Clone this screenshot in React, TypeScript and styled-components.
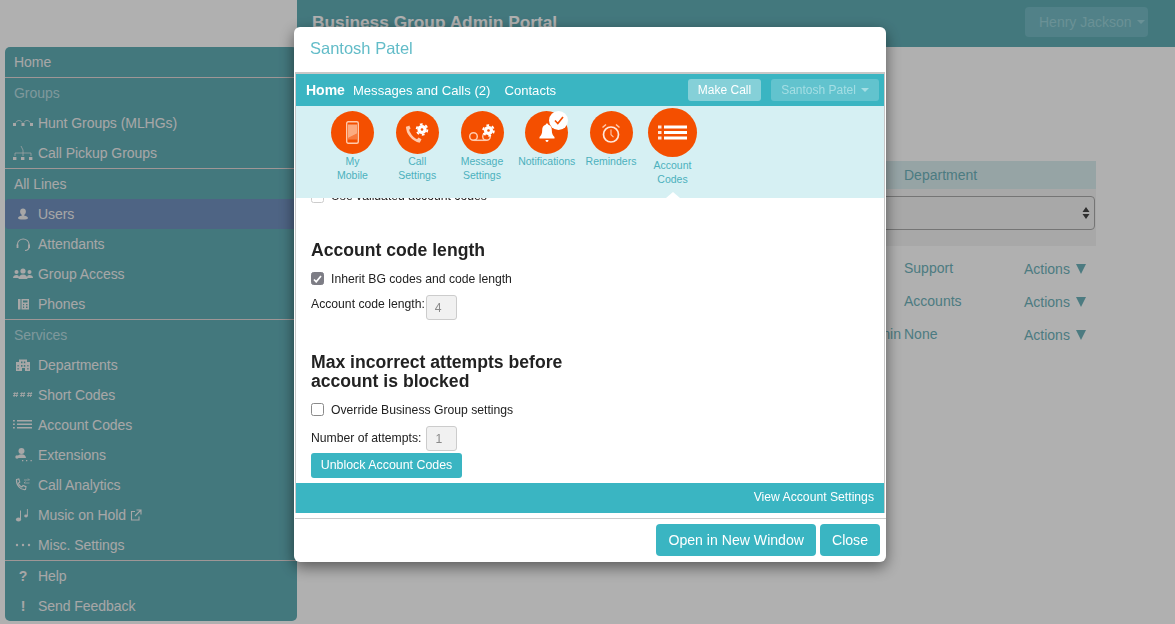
import React from 'react';
import styled, { createGlobalStyle } from 'styled-components';

const GlobalStyle = createGlobalStyle`
  html, body {
    margin: 0;
    height: 100%;
    overflow: hidden;
    background: #fff;
    font-family: "Liberation Sans", Arial, sans-serif;
  }
  * { box-sizing: border-box; }
`;

/* sidebar glyphs, all on a 20x16 box */
const SideIcons: Record<string, React.ReactNode> = {
  hunt: (
    <>
      <path d="M3 7.500a3.200 3.200 0 0 1 6 0M11 7.500a3.200 3.200 0 0 1 6 0" fill="none" stroke="currentColor" strokeWidth="0.700" />
      <rect x="0" y="8" width="3" height="3" fill="currentColor" />
      <rect x="8.500" y="8" width="3" height="3" fill="currentColor" />
      <rect x="17" y="8" width="3" height="3" fill="currentColor" />
    </>
  ),
  pickup: (
    <>
      <path d="M8 1l2 4v3M2 11V8h16v3M10 8v3" fill="none" stroke="currentColor" strokeWidth="0.700" />
      <rect x="0" y="12" width="3.400" height="3" fill="currentColor" />
      <rect x="8" y="12" width="3.400" height="3" fill="currentColor" />
      <rect x="16" y="12" width="3.400" height="3" fill="currentColor" />
    </>
  ),
  user: (
    <path d="M10 2.500c1.800 0 2.900 1.300 2.900 3 0 1.400-.7 2.700-1.600 3.300v1c2 .4 3.700 1 3.700 2.200 0 1-2.200 1.500-5 1.500s-5-.5-5-1.500c0-1.200 1.700-1.800 3.700-2.200v-1c-.9-.6-1.600-1.900-1.600-3.300 0-1.700 1.100-3 2.900-3z" fill="currentColor" />
  ),
  headset: (
    <>
      <path d="M4.500 10V8a5.800 5.800 0 0 1 11.500 0v3c0 2-1.500 3.300-4 3.500" fill="none" stroke="currentColor" strokeWidth="1.100" />
      <rect x="3.600" y="8.500" width="1.800" height="3.500" fill="currentColor" />
      <rect x="15.200" y="8.500" width="1.800" height="3.500" fill="currentColor" />
    </>
  ),
  group: (
    <>
      <circle cx="3.500" cy="6" r="2" fill="currentColor" />
      <circle cx="16.500" cy="6" r="2" fill="currentColor" />
      <circle cx="10" cy="5" r="2.600" fill="currentColor" />
      <path d="M0 12c0-2 1.500-3 3.500-3S6 10 6 12zM14 12c0-2 .5-3 2.500-3s3.500 1 3.500 3zM5.500 13c0-3 2-4.500 4.500-4.500s4.500 1.500 4.500 4.500z" fill="currentColor" />
    </>
  ),
  phone: (
    <>
      <rect x="5" y="3" width="2.500" height="10.500" fill="currentColor" />
      <path d="M8.500 3H16v10.500H8.500zM10 4.500v2h4.500v-2zM10 8v1.200h1.200V8zM13 8v1.200h1.500V8zM10 10.500V12h1.200v-1.500zM13 10.500V12h1.500v-1.500z" fill="currentColor" fillRule="evenodd" />
    </>
  ),
  dept: (
    <path d="M6 2.500h8V5h3v9h-5v-3H9v3H3V5h3zM8 4.500v1.800h1.500V4.500zM10.800 4.500v1.800h1.500V4.500zM8 8v1.800h1.500V8zM10.800 8v1.800h1.500V8zM4.500 8v1.500h1.200V8zM14.300 8v1.500h1.200V8zM4.500 11v1.500h1.200V11zM14.300 11v1.500h1.200V11z" fill="currentColor" fillRule="evenodd" />
  ),
  hash: (
    <g stroke="currentColor" strokeWidth="0.800" fill="none">
      <path d="M2 5l-1 5M4.400 5l-1 5M.2 6.500h5M0 8.500h5" />
      <path d="M9 5l-1 5M11.400 5l-1 5M7.200 6.500h5M7 8.500h5" />
      <path d="M16 5l-1 5M18.400 5l-1 5M14.200 6.500h5M14 8.500h5" />
    </g>
  ),
  list: (
    <g fill="currentColor">
      <rect x="0" y="3" width="1.800" height="1.500" />
      <rect x="0" y="6.500" width="1.800" height="1.500" />
      <rect x="0" y="10" width="1.800" height="1.500" />
      <rect x="4" y="3" width="15" height="1.500" />
      <rect x="4" y="6.500" width="15" height="1.500" />
      <rect x="4" y="10" width="15" height="1.500" />
    </g>
  ),
  extension: (
    <>
      <circle cx="8.500" cy="4" r="3" fill="currentColor" />
      <path d="M4 11c0-2.500 2-3.800 4.500-3.800S13 8.500 13 11z" fill="currentColor" />
      <circle cx="4" cy="10" r="1.700" fill="currentColor" />
      <path d="M9 13h1.300v1.300H9zM13 13h1.300v1.300H13zM17.500 13h1.300v1.300h-1.300z" fill="currentColor" />
    </>
  ),
  analytics: (
    <>
      <path d="M3.500 2.500l2.300-.5 1 3L5.300 6.200c.6 1.800 1.800 3.100 3.500 3.800l1.200-1.500 3 1.200-.5 2.800C7.500 13.300 3 8 3.500 2.500z" fill="none" stroke="currentColor" strokeWidth="1.100" />
      <path d="M11 3h5.500M15 1.500L16.500 3M11 6h5.500M12.500 4.500L11 6" fill="none" stroke="currentColor" strokeWidth="0.700" />
    </>
  ),
  music: (
    <>
      <ellipse cx="5.500" cy="12.500" rx="2.600" ry="2" fill="currentColor" />
      <path d="M7.500 12.500V3.500" stroke="currentColor" strokeWidth="1" />
      <ellipse cx="13" cy="9" rx="1.800" ry="1.400" fill="currentColor" />
      <path d="M14.400 9V2" stroke="currentColor" strokeWidth="0.900" />
    </>
  ),
  dots: (
    <g fill="currentColor">
      <circle cx="4" cy="8" r="1.200" />
      <circle cx="10" cy="8" r="1.200" />
      <circle cx="16" cy="8" r="1.200" />
    </g>
  ),
};

type NavEntry = { label: string; icon?: string; glyph?: string; external?: boolean };
type NavBlock = { heading?: string; dim?: boolean; items: NavEntry[] };

const navBlocks: NavBlock[] = [
  { heading: 'Home', items: [] },
  {
    heading: 'Groups',
    dim: true,
    items: [
      { label: 'Hunt Groups (MLHGs)', icon: 'hunt' },
      { label: 'Call Pickup Groups', icon: 'pickup' },
    ],
  },
  {
    heading: 'All Lines',
    items: [
      { label: 'Users', icon: 'user' },
      { label: 'Attendants', icon: 'headset' },
      { label: 'Group Access', icon: 'group' },
      { label: 'Phones', icon: 'phone' },
    ],
  },
  {
    heading: 'Services',
    dim: true,
    items: [
      { label: 'Departments', icon: 'dept' },
      { label: 'Short Codes', icon: 'hash' },
      { label: 'Account Codes', icon: 'list' },
      { label: 'Extensions', icon: 'extension' },
      { label: 'Call Analytics', icon: 'analytics' },
      { label: 'Music on Hold', icon: 'music', external: true },
      { label: 'Misc. Settings', icon: 'dots' },
    ],
  },
  {
    items: [
      { label: 'Help', glyph: '?' },
      { label: 'Send Feedback', glyph: '!' },
    ],
  },
];

const tableRows = [
  { role: '', dept: 'Support' },
  { role: '', dept: 'Accounts' },
  { role: 'Admin', dept: 'None' },
];

const PEACH = '#ffc9ab';

function Gear({ cx, cy }: { cx: number; cy: number }) {
  return (
    <g>
      <circle cx={cx} cy={cy} r="4.600" fill="#fff" />
      <circle cx={cx} cy={cy} r="5.400" fill="none" stroke="#fff" strokeWidth="1.800" strokeDasharray="2.800 2.860" />
      <circle cx={cx} cy={cy} r="1.300" fill="#f44f00" />
    </g>
  );
}

function CircleIcon({ name }: { name: string }) {
  if (name === 'mobile') {
    return (
      <svg width="13" height="23" viewBox="0 0 13 23">
        <rect x="0.700" y="0.700" width="11.600" height="21.600" rx="1.500" fill="none" stroke={PEACH} strokeWidth="1.400" />
        <path d="M2 3.500h9v9L2 17z" fill={PEACH} opacity="0.75" />
        <path d="M2 17l9-4.500v6H2z" fill={PEACH} opacity="0.35" />
      </svg>
    );
  }
  if (name === 'call') {
    return (
      <svg width="26" height="22" viewBox="0 0 26 22">
        <path d="M3.500 4.500c-.5 6 5 13.500 12.500 15" fill="none" stroke={PEACH} strokeWidth="2.600" />
        <path d="M1.800 5.500l3.500-2 1.300 3-2.500 2zM12.500 18l2-2.500 3 1.700-1.500 3z" fill={PEACH} />
        <Gear cx={18} cy={7.500} />
      </svg>
    );
  }
  if (name === 'message') {
    return (
      <svg width="30" height="22" viewBox="0 0 30 22">
        <circle cx="6.500" cy="14.500" r="3.800" fill="none" stroke={PEACH} strokeWidth="1.500" />
        <circle cx="19.500" cy="14.500" r="3.800" fill="none" stroke={PEACH} strokeWidth="1.500" />
        <path d="M6.500 18.300h13" stroke={PEACH} strokeWidth="1.500" />
        <Gear cx={21.500} cy={8.500} />
      </svg>
    );
  }
  if (name === 'bell') {
    return (
      <svg width="16" height="20" viewBox="0 0 16 20">
        <path d="M8 0.500c.9 0 1.300.6 1.300 1.300 2.700.7 3.500 2.700 3.500 5.200 0 3.800 1 5.300 2.700 7v1.500H.5V14c1.700-1.700 2.700-3.200 2.700-7 0-2.500.8-4.500 3.500-5.200C6.700 1.100 7.100.5 8 .5z" fill="#fff" />
        <path d="M6.500 17h3c0 1.300-.7 2-1.500 2s-1.500-.7-1.500-2z" fill="#fff" />
      </svg>
    );
  }
  if (name === 'clock') {
    return (
      <svg width="20" height="20" viewBox="0 0 20 20">
        <circle cx="10" cy="11.500" r="7.500" fill="none" stroke="#ffe7da" strokeWidth="1.700" />
        <path d="M10 6.500v5.200l2.500 2.500" fill="none" stroke={PEACH} strokeWidth="1.100" />
        <path d="M1.500 4.500l3.500-3M18.500 4.500l-3.500-3" stroke={PEACH} strokeWidth="1.500" />
      </svg>
    );
  }
  return (
    <svg width="29" height="15" viewBox="0 0 29 15">
      <g fill="#fff">
        <rect x="0" y="0.500" width="3.500" height="3" opacity="0.85" />
        <rect x="0" y="6" width="3.500" height="3" opacity="0.85" />
        <rect x="0" y="11.500" width="3.500" height="3" opacity="0.85" />
        <rect x="6" y="0.500" width="23" height="3" />
        <rect x="6" y="6" width="23" height="3" />
        <rect x="6" y="11.500" width="23" height="3" />
      </g>
    </svg>
  );
}

const shortcuts = [
  { key: 'mobile', lines: ['My', 'Mobile'], width: 65 },
  { key: 'call', lines: ['Call', 'Settings'], width: 64.5 },
  { key: 'message', lines: ['Message', 'Settings'], width: 65 },
  { key: 'bell', lines: ['Notifications'], width: 64.5, badge: true },
  { key: 'clock', lines: ['Reminders'], width: 64 },
  { key: 'list', lines: ['Account', 'Codes'], width: 59, active: true },
];

export default function App() {
  return (
    <>
      <GlobalStyle />
      <Page>
        <Sidebar>
          {navBlocks.map((block, i) => (
            <NavSection key={i}>
              {block.heading && <NavHeading $dim={block.dim}>{block.heading}</NavHeading>}
              {block.items.map((item) => (
                <NavItem key={item.label} $active={item.label === 'Users'}>
                  <NavIcon>
                    {item.icon ? (
                      <svg width="20" height="16" viewBox="0 0 20 16">
                        {SideIcons[item.icon]}
                      </svg>
                    ) : (
                      <b>{item.glyph}</b>
                    )}
                  </NavIcon>
                  {item.label}
                  {item.external && (
                    <svg width="12" height="12" viewBox="0 0 12 12">
                      <path d="M5 2.500H1.500v8.500H9V7.500M6.500 1H11v4.500M11 1L5 7" fill="none" stroke="currentColor" strokeWidth="1.100" />
                    </svg>
                  )}
                </NavItem>
              ))}
            </NavSection>
          ))}
        </Sidebar>
        <Main>
          <TopBar>
            <PortalTitle>Business Group Admin Portal</PortalTitle>
            <UserButton>
              Henry Jackson <Caret />
            </UserButton>
          </TopBar>
          <TablePanel>
            <HeaderRow>
              <span />
              <span>Department</span>
            </HeaderRow>
            <FilterRow>
              <FakeSelect>
                <svg width="8" height="14" viewBox="0 0 8 14">
                  <path d="M4 1l3.500 5h-7zM4 13L.500 8h7z" fill="#444" />
                </svg>
              </FakeSelect>
            </FilterRow>
            <DataRows>
              {tableRows.map((row) => (
                <DataRow key={row.dept}>
                  <RoleCell>{row.role}</RoleCell>
                  <DeptCell>{row.dept}</DeptCell>
                  <ActionCell>
                    Actions <ActionArrow />
                  </ActionCell>
                </DataRow>
              ))}
            </DataRows>
          </TablePanel>
        </Main>
      </Page>
      <Backdrop />
      <ModalLayer>
        <Modal>
          <ModalTitle>Santosh Patel</ModalTitle>
          <Frame>
            <FrameNav>
              <HomeLink>Home</HomeLink>
              <FrameLink>Messages and Calls (2)</FrameLink>
              <FrameLink>Contacts</FrameLink>
              <FrameActions>
                <MakeCall>Make Call</MakeCall>
                <ProfileButton>
                  Santosh Patel <Caret />
                </ProfileButton>
              </FrameActions>
            </FrameNav>
            <ShortcutBand>
              {shortcuts.map((s) => (
                <Shortcut key={s.key} style={{ width: s.width }} $active={s.active}>
                  <Disc $active={s.active}>
                    <CircleIcon name={s.key} />
                    {s.badge && (
                      <Badge>
                        <svg width="10" height="9" viewBox="0 0 10 9">
                          <path d="M1 4.500l2.800 3L9 1" fill="none" stroke="#f44f00" strokeWidth="1.700" />
                        </svg>
                      </Badge>
                    )}
                  </Disc>
                  <ShortcutLabel>
                    {s.lines.map((l) => (
                      <div key={l}>{l}</div>
                    ))}
                  </ShortcutLabel>
                </Shortcut>
              ))}
              <ActivePointer />
            </ShortcutBand>
            <Content>
              <ClippedRow>
                <CheckBox $faint />
                Use validated account codes
              </ClippedRow>
              <SectionTitle>Account code length</SectionTitle>
              <CheckRow>
                <CheckBox $checked>
                  <svg width="9" height="8" viewBox="0 0 9 8">
                    <path d="M1 4.500l2.200 2.300L8 1" fill="none" stroke="#fff" strokeWidth="1.700" />
                  </svg>
                </CheckBox>
                Inherit BG codes and code length
              </CheckRow>
              <FieldRow>
                <RaisedLabel>Account code length:</RaisedLabel>
                <ValueBox>4</ValueBox>
              </FieldRow>
              <SectionTitle $second>Max incorrect attempts before account is blocked</SectionTitle>
              <CheckRow>
                <CheckBox />
                Override Business Group settings
              </CheckRow>
              <FieldRow $second>
                Number of attempts:<ValueBox>1</ValueBox>
              </FieldRow>
              <UnblockButton>Unblock Account Codes</UnblockButton>
            </Content>
            <FrameFooter>View Account Settings</FrameFooter>
          </Frame>
          <ModalFooter>
            <FooterButton>Open in New Window</FooterButton>
            <FooterButton>Close</FooterButton>
          </ModalFooter>
        </Modal>
      </ModalLayer>
    </>
  );
}

const Page = styled.div`
  display: flex;
  width: 1175px;
  height: 624px;
  overflow: hidden;
  background: #fff;
`;

const Sidebar = styled.nav`
  width: 292px;
  height: 574px;
  margin: 47px 0 0 5px;
  flex-shrink: 0;
  border-radius: 5px;
  background: #62aeb6;
  color: #f2f2f2;
  font-size: 14px;
  letter-spacing: -0.05px;
`;

const NavSection = styled.div`
  border-bottom: 1px solid #e6d9d9;

  &:last-child {
    border-bottom: 0;
  }
`;

const NavHeading = styled.div<{ $dim?: boolean }>`
  height: 30px;
  padding-left: 9px;
  line-height: 30px;
  color: ${(p) => (p.$dim ? '#b8dde1' : '#f2f2f2')};
`;

const NavItem = styled.div<{ $active?: boolean }>`
  display: flex;
  align-items: center;
  gap: 4px;
  height: 30px;
  padding-left: 8px;
  border-radius: ${(p) => (p.$active ? '4px 0 0 4px' : '0')};
  background: ${(p) => (p.$active ? '#7191bf' : 'transparent')};
`;

const NavIcon = styled.span`
  display: flex;
  align-items: center;
  justify-content: center;
  width: 20px;
  margin-right: 1px;
  font-size: 14px;
`;

const Main = styled.main`
  flex: 1;
  min-width: 0;
`;

const TopBar = styled.header`
  display: flex;
  align-items: center;
  justify-content: space-between;
  height: 47px;
  padding: 0 27px 3px 15px;
  background: #62aeb6;
  color: #fff;
`;

const PortalTitle = styled.h1`
  margin: 0;
  font-size: 17.3px;
  font-weight: 700;
`;

const UserButton = styled.div`
  display: flex;
  align-items: center;
  gap: 5px;
  width: 123px;
  height: 30px;
  padding-left: 14px;
  border-radius: 4px;
  background: #76bcc5;
  color: #9ad2d9;
  font-size: 14px;
`;

const Caret = styled.i`
  display: inline-block;
  border-top: 4px solid currentColor;
  border-left: 4px solid transparent;
  border-right: 4px solid transparent;
`;

const TablePanel = styled.section`
  width: 776px;
  margin: 114px 0 0 23px;
  font-size: 14px;
  color: #6fb3bb;
`;

const HeaderRow = styled.div`
  display: grid;
  grid-template-columns: 584px 1fr;
  align-items: center;
  height: 28px;
  background: #d9eef0;
`;

const FilterRow = styled.div`
  height: 57px;
  padding: 7px 1px 0 0;
  background: #f4f4f4;
`;

const FakeSelect = styled.div`
  display: flex;
  align-items: center;
  justify-content: flex-end;
  height: 34px;
  padding-right: 4px;
  border: 1px solid #aaa;
  border-radius: 4px;
`;

const DataRows = styled.div`
  padding-top: 6px;
`;

const DataRow = styled.div`
  display: grid;
  grid-template-columns: 584px 120px 1fr;
  align-items: center;
  height: 33px;
`;

const RoleCell = styled.span`
  margin-bottom: 2px;
  padding-right: 3px;
  text-align: right;
`;

const DeptCell = styled.span`
  margin-bottom: 2px;
`;

const ActionCell = styled.span`
  display: flex;
  align-items: center;
  gap: 6px;
`;

const ActionArrow = styled.i`
  border-top: 10px solid currentColor;
  border-left: 5.5px solid transparent;
  border-right: 5.5px solid transparent;
`;

const Backdrop = styled.div`
  position: fixed;
  inset: 0;
  background: rgba(0, 0, 0, 0.31);
`;

const ModalLayer = styled.div`
  position: fixed;
  inset: 0;
  padding: 27px 0 0 294px;
`;

const Modal = styled.div`
  width: 592px;
  height: 535px;
  border-radius: 6px;
  background: #fff;
  box-shadow: 0 5px 15px rgba(0, 0, 0, 0.5);
  color: #222;
`;

const ModalTitle = styled.h4`
  height: 45px;
  margin: 0;
  padding-left: 16px;
  font-size: 16.5px;
  font-weight: 400;
  line-height: 43px;
  color: #62bcc8;
`;

const Frame = styled.div`
  display: flex;
  flex-direction: column;
  height: 441px;
  margin: 0 1px;
  border: 1px solid #c8c8c8;
  border-top-width: 2px;
  border-bottom: 0;
`;

const FrameNav = styled.div`
  display: flex;
  align-items: center;
  height: 32px;
  padding: 0 5px 0 10px;
  background: #3ab5c2;
`;

const FrameLink = styled.span`
  margin-right: 14px;
  font-size: 13.1px;
  color: #fff;
`;

const HomeLink = styled(FrameLink)`
  margin-right: 8px;
  font-size: 14px;
  font-weight: 700;
`;

const FrameActions = styled.div`
  display: flex;
  gap: 10px;
  margin-left: auto;
`;

const MakeCall = styled.div`
  width: 73px;
  height: 22px;
  border-radius: 3px;
  background: #85d0d8;
  color: #fff;
  font-size: 12px;
  line-height: 22px;
  text-align: center;
`;

const ProfileButton = styled.div`
  display: flex;
  align-items: center;
  justify-content: center;
  gap: 5px;
  width: 108px;
  height: 22px;
  border-radius: 3px;
  background: #62c3ce;
  color: #a5dee4;
  font-size: 12px;
`;

const ShortcutBand = styled.div`
  position: relative;
  display: flex;
  align-items: flex-start;
  height: 92px;
  padding-left: 24px;
  background: #d6f0f3;
`;

const Shortcut = styled.div<{ $active?: boolean }>`
  display: flex;
  flex-direction: column;
  align-items: center;
  padding-top: ${(p) => (p.$active ? '2px' : '5px')};
`;

const Disc = styled.div<{ $active?: boolean }>`
  position: relative;
  display: flex;
  align-items: center;
  justify-content: center;
  width: ${(p) => (p.$active ? '49px' : '43px')};
  height: ${(p) => (p.$active ? '49px' : '43px')};
  margin-bottom: ${(p) => (p.$active ? '1px' : '0')};
  border-radius: 50%;
  background: #f44f00;
`;

const Badge = styled.span`
  position: absolute;
  top: 0;
  right: 0;
  display: flex;
  align-items: center;
  justify-content: center;
  width: 19px;
  height: 19px;
  border-radius: 50%;
  background: #fff;
`;

const ShortcutLabel = styled.div`
  font-size: 10.5px;
  line-height: 14px;
  text-align: center;
  white-space: nowrap;
  color: #4cb0bd;
`;

const ActivePointer = styled.span`
  position: absolute;
  left: 370px;
  bottom: 0;
  border-bottom: 6px solid #fff;
  border-left: 7px solid transparent;
  border-right: 7px solid transparent;
`;

const Content = styled.div`
  height: 285px;
  padding-left: 15px;
  overflow: hidden;
  font-size: 12.2px;
  background: #fff;
`;

const ClippedRow = styled.div`
  display: flex;
  align-items: center;
  gap: 7px;
  height: 16px;
  margin-top: -10px;
`;

const SectionTitle = styled.h3<{ $second?: boolean }>`
  max-width: ${(p) => (p.$second ? '262px' : 'none')};
  margin: ${(p) => (p.$second ? '33px' : '37px')} 0 0;
  font-size: 17.6px;
  font-weight: 700;
  line-height: 19.5px;
`;

const CheckRow = styled.div`
  display: flex;
  align-items: center;
  gap: 7px;
  height: 16px;
  margin-top: 10px;
`;

const CheckBox = styled.span<{ $checked?: boolean; $faint?: boolean }>`
  display: flex;
  align-items: center;
  justify-content: center;
  width: 13px;
  height: 13px;
  border: 1px solid ${(p) => (p.$checked ? '#7d7d85' : p.$faint ? '#ccc' : '#8a8a8a')};
  border-radius: 2.5px;
  background: ${(p) => (p.$checked ? '#7d7d85' : '#fff')};
`;

const FieldRow = styled.div<{ $second?: boolean }>`
  display: flex;
  align-items: center;
  gap: ${(p) => (p.$second ? '5px' : '1px')};
  margin-top: 8px;
`;

const RaisedLabel = styled.span`
  margin-bottom: 6px;
`;

const ValueBox = styled.span`
  width: 31px;
  height: 25px;
  padding-left: 8px;
  border: 1px solid #ccc;
  border-radius: 3px;
  background: #f1f1f1;
  color: #8a8a8a;
  line-height: 25px;
`;

const UnblockButton = styled.div`
  width: 151px;
  height: 25px;
  margin-top: 2px;
  border-radius: 3px;
  background: #3ab5c2;
  color: #fff;
  font-size: 12.4px;
  line-height: 24px;
  text-align: center;
`;

const FrameFooter = styled.div`
  height: 30px;
  padding-right: 10px;
  background: #3ab5c2;
  color: #fff;
  font-size: 12.2px;
  line-height: 28px;
  text-align: right;
`;

const ModalFooter = styled.div`
  display: flex;
  justify-content: flex-end;
  gap: 4px;
  margin: 5px 0 0 1px;
  padding: 5px 6px 0 0;
  border-top: 1px solid #ccc;
`;

const FooterButton = styled.div`
  height: 32px;
  padding: 0 12px;
  border-radius: 4px;
  background: #3ab5c2;
  color: #fff;
  font-size: 14.1px;
  line-height: 32px;
`;
